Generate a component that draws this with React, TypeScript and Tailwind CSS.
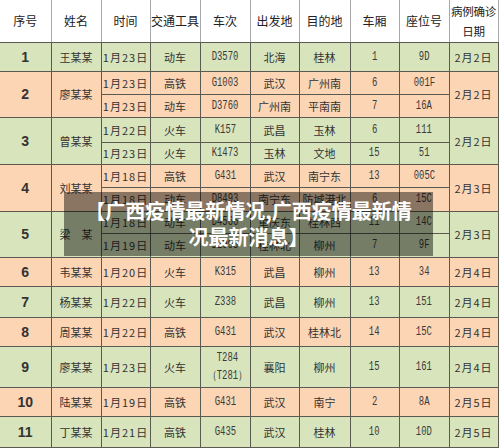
import React from 'react';

// --- TYPES ---

type Trip = {
    date: string;
    mode: string;
    code: string;
    from: string;
    to: string;
    car: string;
    seat: string;
    h: number;
};

type Case = {
    no: string;
    name: string;
    confirmed: string;
    tone: 'green' | 'orange';
    trips: Trip[];
};

// --- DATA ---

const HEADERS = ['序号', '姓名', '时间', '交通工具', '车次', '出发地', '目的地', '车厢', '座位号', '病例确诊\n日期'];

const COL_WIDTHS = ['w-[51px]', 'w-[50px]', 'w-[49px]', 'w-[50px]', 'w-[50px]', 'w-[49px]', 'w-[51px]', 'w-[49px]', 'w-[50px]', 'w-[49px]'];

const CASES: Case[] = [
    {
        no: '1', name: '王某某', confirmed: '2月2日', tone: 'green',
        trips: [{ date: '1月23日', mode: '动车', code: 'D3570', from: '北海', to: '桂林', car: '1', seat: '9D', h: 29 }],
    },
    {
        no: '2', name: '廖某某', confirmed: '2月2日', tone: 'orange',
        trips: [
            { date: '1月23日', mode: '高铁', code: 'G1003', from: '武汉', to: '广州南', car: '6', seat: '001F', h: 23 },
            { date: '1月23日', mode: '动车', code: 'D3760', from: '广州南', to: '平南南', car: '7', seat: '16A', h: 23 },
        ],
    },
    {
        no: '3', name: '曾某某', confirmed: '2月2日', tone: 'green',
        trips: [
            { date: '1月22日', mode: '火车', code: 'K157', from: '武昌', to: '玉林', car: '6', seat: '111', h: 25 },
            { date: '1月23日', mode: '火车', code: 'K1473', from: '玉林', to: '文地', car: '15', seat: '51', h: 22 },
        ],
    },
    {
        no: '4', name: '刘某某', confirmed: '2月3日', tone: 'orange',
        trips: [
            { date: '1月18日', mode: '高铁', code: 'G431', from: '武汉', to: '南宁东', car: '13', seat: '005C', h: 23 },
            { date: '1月18日', mode: '动车', code: 'D8493', from: '南宁东', to: '防城港北', car: '6', seat: '15C', h: 24 },
        ],
    },
    {
        no: '5', name: '梁　某', confirmed: '2月3日', tone: 'green',
        trips: [
            { date: '1月18日', mode: '动车', code: 'D4566', from: '重庆东', to: '桂林西', car: '11', seat: '14C', h: 22 },
            { date: '1月19日', mode: '动车', code: 'D2993', from: '桂林北', to: '柳州', car: '7', seat: '9F', h: 24 },
        ],
    },
    {
        no: '6', name: '韦某某', confirmed: '2月4日', tone: 'orange',
        trips: [{ date: '1月20日', mode: '火车', code: 'K315', from: '武昌', to: '柳州', car: '13', seat: '34', h: 29 }],
    },
    {
        no: '7', name: '杨某某', confirmed: '2月4日', tone: 'green',
        trips: [{ date: '1月22日', mode: '火车', code: 'Z338', from: '武昌', to: '柳州', car: '13', seat: '151', h: 31 }],
    },
    {
        no: '8', name: '周某某', confirmed: '2月4日', tone: 'orange',
        trips: [{ date: '1月22日', mode: '高铁', code: 'G431', from: '武汉', to: '桂林北', car: '14', seat: '15C', h: 29 }],
    },
    {
        no: '9', name: '廖某某', confirmed: '2月4日', tone: 'green',
        trips: [{ date: '1月23日', mode: '火车', code: 'T284\n（T281）', from: '襄阳', to: '柳州', car: '15', seat: '161', h: 41 }],
    },
    {
        no: '10', name: '陆某某', confirmed: '2月5日', tone: 'orange',
        trips: [{ date: '1月19日', mode: '高铁', code: 'G431', from: '武汉', to: '南宁', car: '2', seat: '8A', h: 29 }],
    },
    {
        no: '11', name: '丁某某', confirmed: '2月5日', tone: 'green',
        trips: [{ date: '1月21日', mode: '高铁', code: 'G435', from: '武汉', to: '桂林', car: '10', seat: '10D', h: 31 }],
    },
];

// --- CELLS ---

const CELL = 'border border-[#5a5a52] p-0 text-center align-middle';

const Narrow = ({ children }: { children: string }) => (
    <span className="inline-block whitespace-pre-line font-['Liberation_Mono',monospace] text-[12px] leading-[18px] text-[#3a3a3a] scale-x-[0.74]">
        {children}
    </span>
);

const TripCells = ({ trip }: { trip: Trip }) => (
    <>
        <td className={CELL}>
            <span className="tracking-[1px]">{trip.date}</span>
        </td>
        <td className={CELL}>{trip.mode}</td>
        <td className={CELL}><Narrow>{trip.code}</Narrow></td>
        <td className={CELL}>{trip.from}</td>
        <td className={`${CELL} whitespace-nowrap`}>{trip.to}</td>
        <td className={CELL}><Narrow>{trip.car}</Narrow></td>
        <td className={CELL}><Narrow>{trip.seat}</Narrow></td>
    </>
);

const CaseRows = ({ item }: { item: Case }) => {
    const bg = item.tone === 'green' ? 'bg-[#d8e4bc]' : 'bg-[#fcd5b4]';
    const span = item.trips.length;
    return (
        <>
            {item.trips.map((trip, i) => (
                <tr key={i} className={bg} style={{ height: trip.h }}>
                    {i === 0 && (
                        <>
                            <td rowSpan={span} className={`${CELL} border-l-0 font-['Liberation_Sans',sans-serif] text-[14px] font-semibold text-[#333]`}>
                                {item.no}
                            </td>
                            <td rowSpan={span} className={CELL}>{item.name}</td>
                        </>
                    )}
                    <TripCells trip={trip} />
                    {i === 0 && (
                        <td rowSpan={span} className={CELL}>
                            <span className="tracking-[1px]">{item.confirmed}</span>
                        </td>
                    )}
                </tr>
            ))}
        </>
    );
};

// --- MAIN ---

const App = () => (
    <div className="relative h-[448px] w-[500px] overflow-hidden bg-white">
        <table className="w-[498px] table-fixed border-collapse font-['Noto_Sans_CJK_SC',sans-serif] text-[11px] leading-[14px] text-[#333]">
            <colgroup>
                {COL_WIDTHS.map((w, i) => (
                    <col key={i} className={w} />
                ))}
            </colgroup>
            <thead>
                <tr className="h-[42px] bg-white">
                    {HEADERS.map((h, i) => (
                        <th
                            key={h}
                            className={`whitespace-pre-line border-x border-b border-x-[#a8a8a8] border-b-[#5a5a52] p-0 text-center align-middle font-normal text-[#222] ${
                                i === 0 ? 'border-l-0' : ''
                            } ${i === 9 ? 'text-[11.5px] leading-[20px] tracking-[-0.3px]' : 'text-[12px] leading-[16px]'}`}
                        >
                            {h}
                        </th>
                    ))}
                </tr>
            </thead>
            <tbody>
                {CASES.map((item) => (
                    <CaseRows key={item.no} item={item} />
                ))}
            </tbody>
        </table>

        {/* caption banner laid over the table */}
        <div className="absolute left-[64px] top-[192px] flex h-[64px] w-[369px] items-center justify-center bg-black/45">
            <p className="text-center font-['Noto_Sans_CJK_SC',sans-serif] text-[20px] font-bold leading-[26px] text-white">
                【广西疫情最新情况,广西疫情最新情
                <br />
                况最新消息】
            </p>
        </div>
    </div>
);

export default App;
